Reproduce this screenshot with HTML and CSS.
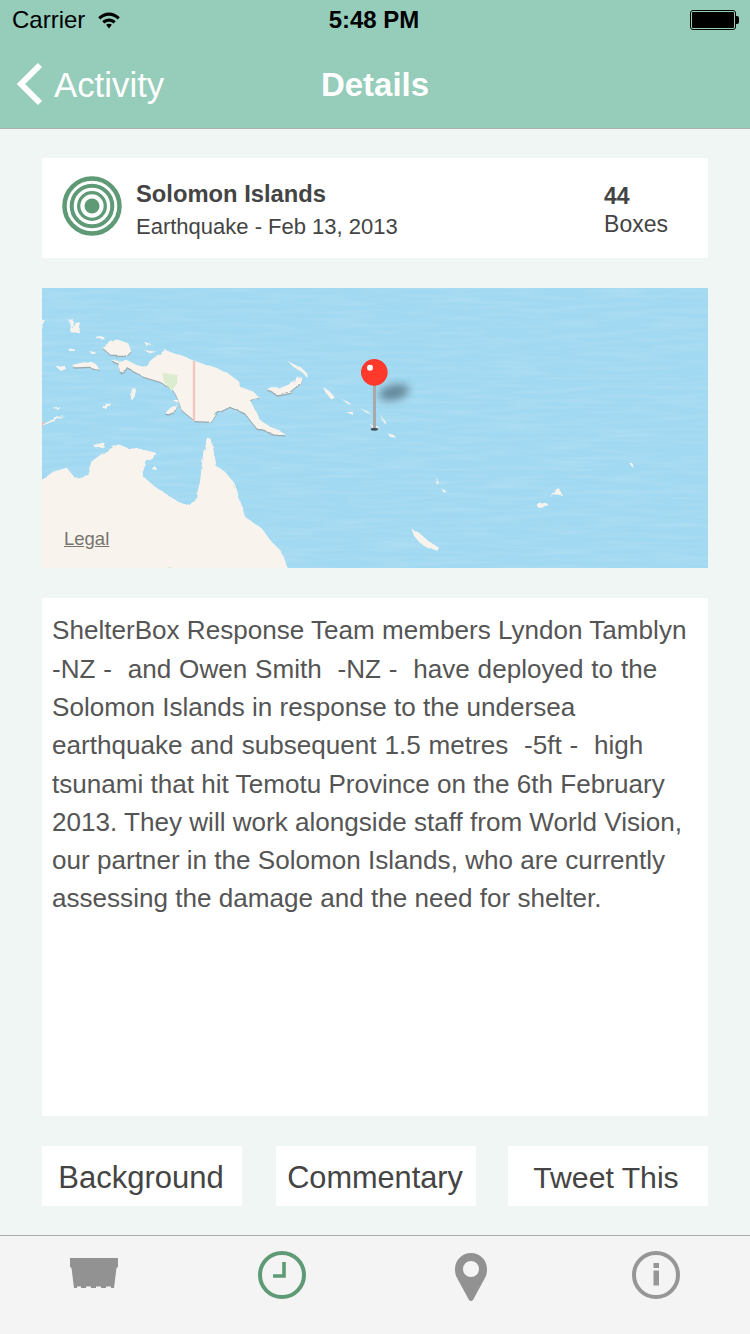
FILE: index.html
```html
<!DOCTYPE html>
<html lang="en">
<head>
  <meta charset="UTF-8">
  <title>Details</title>
  <link rel="stylesheet" href="styles.css">
</head>
<body>
  <header class="top">
    <div class="status">
      <div class="status-left">
        <span>Carrier</span>
        <svg class="wifi" width="24" height="18" viewBox="0 0 26 20">
          <path d="M1 7 C8 0 18 0 25 7 L22.6 9.4 C17 4 9 4 3.4 9.4 Z" fill="#000"/>
          <path d="M5.5 11.5 C10 7.4 16 7.4 20.5 11.5 L18 14 C15 11.2 11 11.2 8 14 Z" fill="#000"/>
          <path d="M9.8 15.4 C11.8 13.8 14.2 13.8 16.2 15.4 L13 19.4 Z" fill="#000"/>
        </svg>
      </div>
      <span class="clock-text">5:48 PM</span>
      <div class="status-right"><div class="battery"><div class="battery-fill"></div></div></div>
    </div>
    <nav class="navbar">
      <a class="back">
        <svg width="28" height="44" viewBox="0 0 28 44">
          <path d="M25 3 L6 22 L25 41" fill="none" stroke="#fff" stroke-width="6"/>
        </svg>
        <span>Activity</span>
      </a>
      <h1>Details</h1>
    </nav>
  </header>

  <main class="content">
    <section class="summary">
      <svg class="quake" width="60" height="60" viewBox="0 0 60 60">
        <circle cx="30" cy="30" r="27.5" fill="none" stroke="#5e9a76" stroke-width="4.5"/>
        <circle cx="30" cy="30" r="20.3" fill="none" stroke="#5e9a76" stroke-width="4"/>
        <circle cx="30" cy="30" r="13.3" fill="none" stroke="#5e9a76" stroke-width="3.3"/>
        <circle cx="30" cy="30" r="7.5" fill="#5e9a76"/>
      </svg>
      <div class="summary-text">
        <strong>Solomon Islands</strong>
        <span>Earthquake - Feb 13, 2013</span>
      </div>
      <div class="boxes">
        <strong>44</strong>
        <span>Boxes</span>
      </div>
    </section>

    <section class="map">
      <svg width="666" height="280" viewBox="6 9 1998 840">
        <defs>
          <filter id="blur" x="-50%" y="-100%" width="200%" height="300%"><feGaussianBlur stdDeviation="12"/></filter>
          <filter id="coast" x="-5%" y="-5%" width="110%" height="110%" color-interpolation-filters="sRGB">
            <feTurbulence type="fractalNoise" baseFrequency=".035" numOctaves="2" seed="4" result="n"/>
            <feDisplacementMap in="SourceGraphic" in2="n" scale="12"/>
          </filter>
          <filter id="ripple" x="0" y="0" width="100%" height="100%">
            <feTurbulence type="fractalNoise" baseFrequency=".006 .07" numOctaves="2" seed="7"/>
            <feColorMatrix values="0 0 0 0 .47  0 0 0 0 .75  0 0 0 0 .9  1.2 0 0 0 -.48"/>
          </filter>
        </defs>
        <rect x="6" y="9" width="1998" height="840" fill="#a1d9f2"/>
        <rect x="6" y="9" width="1998" height="840" filter="url(#ripple)"/>

        <g filter="url(#coast)">
          <g fill="#9aa9ae" transform="translate(0 4)">
            <path d="M375 195 L465 228 L560 262 L598 290 L600 305 L640 320 L658 338 L630 345 L660 405 L690 425 L715 435 L738 450 L715 450 L650 430 L615 385 L570 365 L530 385 L515 410 L465 408 L425 375 L415 345 L395 310 L360 290 L310 275 L265 250 L240 262 L235 235 L215 228 L260 225 L290 240 L310 245 L340 220 Z"/>
            <path d="M185 185 L230 163 L265 175 L272 195 L255 212 L215 212 Z"/>
            <path d="M675 310 L720 310 L765 290 L770 275 L785 275 L780 295 L750 320 L710 328 Z"/>
            <path d="M95 240 L130 232 L165 235 L180 255 L150 245 L105 247 Z"/>
            <path d="M375 385 L395 365 L415 362 L410 378 L385 388 Z"/>
          </g>
          <g fill="#f8f4ed">
            <!-- new guinea -->
            <path d="M375 195 L465 228 L560 262 L598 290 L600 305 L640 320 L658 338 L630 345 L660 405 L690 425 L715 435 L738 450 L715 450 L650 430 L615 385 L570 365 L530 385 L515 410 L465 408 L425 375 L415 345 L395 310 L360 290 L310 275 L265 250 L240 262 L235 235 L215 228 L260 225 L290 240 L310 245 L340 220 Z"/>
            <path d="M185 185 L230 163 L265 175 L272 195 L255 212 L215 212 Z"/>
            <path d="M675 310 L720 310 L765 290 L770 275 L785 275 L780 295 L750 320 L710 328 Z"/>
            <path d="M742 228 L785 250 L798 262 L802 280 L790 265 L760 245 Z"/>
            <path d="M375 385 L395 365 L415 362 L410 378 L385 388 Z"/>
            <path d="M398 345 L415 345 L415 355 Z"/>
            <!-- west islands -->
            <path d="M95 240 L130 232 L165 235 L180 255 L150 245 L105 247 Z"/>
            <path d="M47 243 L72 240 L78 252 L62 258 Z"/>
            <path d="M90 130 L105 115 L120 112 L115 135 L122 145 L92 142 Z"/>
            <path d="M88 105 L98 102 L98 122 L88 122 Z"/>
            <path d="M165 155 L190 153 L190 160 L172 160 Z"/>
            <path d="M85 192 L102 190 L102 198 L88 198 Z"/>
            <path d="M152 202 L166 200 L166 207 L155 207 Z"/>
            <path d="M310 195 L350 200 L330 205 Z"/>
            <path d="M312 170 L335 178 L320 182 Z"/>
            <path d="M272 340 L282 307 L288 315 L284 335 L276 345 Z"/>
            <path d="M190 372 L200 354 L210 352 L198 372 Z"/>
            <path d="M6 420 L35 405 L75 388 L50 405 L12 420 Z"/>
            <path d="M6 108 L18 108 L6 130 Z"/>
            <path d="M40 372 L62 366 L55 374 Z"/>
            <path d="M160 480 L195 472 L190 485 L165 487 Z"/>
            <!-- solomons -->
            <path d="M850 305 L870 320 L885 340 L870 340 L855 320 Z"/>
            <path d="M902 340 L935 358 L925 358 Z"/>
            <path d="M955 365 L995 388 L985 388 Z"/>
            <path d="M918 382 L938 380 L940 390 Z"/>
            <path d="M1020 388 L1042 420 L1030 412 Z"/>
            <path d="M992 420 L1020 425 L1000 432 Z"/>
            <path d="M1040 442 L1060 448 L1068 458 L1050 456 Z"/>
            <path d="M1187 572 L1192 590 L1205 592 L1190 598 Z"/>
            <path d="M1205 610 L1222 622 L1210 622 Z"/>
            <path d="M1115 732 L1135 742 L1165 768 L1197 788 L1192 797 L1165 790 L1138 772 L1122 752 Z"/>
            <path d="M1490 660 A18 12 0 0 1 1524 660 L1515 668 L1495 668 Z"/>
            <path d="M1525 632 L1560 612 L1565 630 L1540 628 Z"/>
            <path d="M1768 535 L1780 538 L1776 545 Z"/>
            <!-- australia -->
            <path d="M-10 595 L40 560 L80 548 L105 578 L145 570 L160 525 L195 500 L235 478 L265 490 L310 492 L345 500 L340 520 L320 530 L305 570 L345 605 L380 628 L415 650 L440 660 L465 648 L480 590 L490 500 L505 458 L515 465 L530 545 L555 560 L580 590 L605 660 L615 695 L665 730 L695 770 L720 795 L755 870 L-10 870 Z"/>
            <path d="M335 552 L345 542 L350 555 Z"/>
          </g>
        </g>
        <path d="M367 263 L412 270 L412 295 L395 318 L372 290 Z" fill="#dcedcf"/>
        <path d="M462 228 V408" stroke="#f3c7bd" stroke-width="7"/>
        <path d="M6 412 L14 410 L6 426 Z" fill="#f3b5ad"/>
        <path d="M580 598 L586 606 L582 612 Z" fill="#dcedcf"/>
        <path d="M378 849 L398 849 L388 845 Z" fill="#dcedcf"/>

        <!-- pin shadow -->
        <ellipse cx="1062" cy="322" rx="46" ry="23" transform="rotate(-14 1062 322)" fill="#4e6a7a" opacity=".75" filter="url(#blur)"/>
        <rect x="999" y="290" width="9" height="140" fill="#a9a9ab"/>
        <ellipse cx="1003" cy="433" rx="11" ry="4" fill="#3d4a50"/>
        <circle cx="1003" cy="262" r="40" fill="#ff3a2d"/>
        <circle cx="990" cy="248" r="9" fill="#fff"/>
      </svg>
      <a class="legal">Legal</a>
    </section>

    <section class="story">ShelterBox Response Team members Lyndon Tamblyn <span class="wide">-NZ -  and Owen Smith  -NZ -  have deployed to the </span>Solomon Islands in response to the undersea <span class="wide">earthquake and subsequent 1.5 metres  -5ft -  high </span>tsunami that hit Temotu Province on the 6th February 2013. They will work alongside staff from World Vision, our partner in the Solomon Islands, who are currently assessing the damage and the need for shelter.</section>

    <div class="actions">
      <a class="action">Background</a>
      <a class="action action-mid">Commentary</a>
      <a class="action action-tweet">Tweet This</a>
    </div>
  </main>

  <footer class="tabs">
    <a class="tab tab-box">
      <svg width="48" height="30" viewBox="0 0 48 30">
        <path d="M0 0 H48 V9 L46.5 10 L44 30 H41 V28.5 H36 V30 H31 V28.5 H26 V30 H21 V28.5 H16 V30 H11 V28.5 H7 V30 H4 L1.5 10 L0 9 Z" fill="#929292"/>
      </svg>
    </a>
    <a class="tab tab-clock">
      <svg width="50" height="50" viewBox="0 0 50 50">
        <circle cx="25" cy="25" r="22" fill="none" stroke="#5e9a76" stroke-width="4"/>
        <path d="M27 12 V26 H16" fill="none" stroke="#5e9a76" stroke-width="3.6"/>
      </svg>
    </a>
    <a class="tab tab-pin">
      <svg width="34" height="50" viewBox="0 0 34 50">
        <path fill-rule="evenodd" d="M17 1 C26 1 33 8 33 17 C33 20 32.5 22 32 24 L19 48 Q17 50 15 48 L2 24 C1.5 22 1 20 1 17 C1 8 8 1 17 1 Z M17 9 A8 8 0 1 0 17 25 A8 8 0 1 0 17 9 Z" fill="#929292"/>
      </svg>
    </a>
    <a class="tab">
      <svg width="50" height="50" viewBox="0 0 50 50">
        <circle cx="25" cy="25" r="22" fill="none" stroke="#969696" stroke-width="4"/>
        <rect x="22.5" y="13" width="5.5" height="5" fill="#969696"/>
        <rect x="22.5" y="20.5" width="5.5" height="15" fill="#969696"/>
      </svg>
    </a>
  </footer>
</body>
</html>
```

FILE: styles.css
```css
* {
  box-sizing: border-box;
}

body {
  margin: 0;
  width: 750px;
  height: 1334px;
  display: flex;
  flex-direction: column;
  font-family: "Liberation Sans", Arial, sans-serif;
  background: #f0f6f4;
}

.top {
  height: 129px;
  background: #95ccba;
  border-bottom: 1px solid #a9b3af;
}

.status {
  height: 40px;
  padding: 0 10px 0 12px;
  display: flex;
  align-items: center;
  justify-content: space-between;
  font-size: 24px;
  color: #000;
}

.status-left,
.status-right {
  display: flex;
  align-items: center;
}

.status-left {
  width: 198px;
  gap: 12px;
}

.status-right {
  width: 202px;
  justify-content: flex-end;
}

.clock-text {
  font-weight: bold;
}

.battery {
  width: 46px;
  height: 20px;
  border: 1px solid #000;
  border-radius: 3px;
  padding: 1px;
  margin-right: 4px;
  position: relative;
}

.battery::after {
  content: "";
  position: absolute;
  right: -4px;
  top: 5px;
  width: 3px;
  height: 8px;
  background: #000;
  border-radius: 0 2px 2px 0;
}

.battery-fill {
  height: 100%;
  background: #000;
  border-radius: 1px;
}

.navbar {
  height: 88px;
  padding: 1px 0 0 15px;
  position: relative;
  display: flex;
  align-items: center;
  color: #fff;
}

.back {
  display: flex;
  align-items: center;
  gap: 11px;
  font-size: 34.8px;
}

.back svg {
  margin-top: -1px;
}

.navbar h1 {
  position: absolute;
  left: 0;
  right: 0;
  margin: 0;
  text-align: center;
  font-size: 33px;
  font-weight: bold;
}

.content {
  flex: 1;
  padding: 29px 42px;
  display: flex;
  flex-direction: column;
  gap: 30px;
}

.summary {
  height: 100px;
  padding: 0 40px 0 20px;
  background: #fff;
  display: flex;
  align-items: center;
  gap: 14px;
  color: #444;
}

.quake {
  margin-bottom: 5px;
}

.summary-text {
  flex: 1;
  padding-top: 4px;
  display: flex;
  flex-direction: column;
  gap: 6px;
  font-size: 22px;
}

.summary-text strong {
  font-size: 23.75px;
}

.boxes {
  padding-top: 4px;
  display: flex;
  flex-direction: column;
  gap: 1px;
  font-size: 23px;
}

.map {
  height: 280px;
  position: relative;
  overflow: hidden;
}

.map svg {
  display: block;
}

.legal {
  position: absolute;
  left: 22px;
  bottom: 18px;
  font-size: 18.5px;
  color: #77746d;
  text-decoration: underline;
}

.story {
  height: 518px;
  padding: 13.4px 10px;
  background: #fff;
  font-size: 26.08px;
  line-height: 38.3px;
  color: #555;
  white-space: pre-wrap;
}

.wide {
  word-spacing: .62px;
}

.actions {
  display: flex;
  justify-content: space-between;
}

.action {
  width: 200px;
  height: 60px;
  padding: 3px 2px 0 0;
  background: #fff;
  display: flex;
  align-items: center;
  justify-content: center;
  font-size: 31px;
  color: #444;
}

.action-mid {
  margin-left: 2px;
  font-size: 30.7px;
}

.action-tweet {
  padding-right: 4px;
  font-size: 30.2px;
}

.tabs {
  height: 99px;
  padding-top: 14px;
  background: #f4f4f4;
  border-top: 1px solid #aaa;
  display: grid;
  grid-template-columns: repeat(4, 1fr);
  justify-items: center;
  align-items: start;
}

.tab {
  display: block;
}

.tab svg {
  display: block;
}

.tab-box {
  margin-top: 8px;
}

.tab-clock {
  margin-left: 2px;
}

.tab-pin {
  margin-top: 2px;
  margin-left: 4px;
}
```
